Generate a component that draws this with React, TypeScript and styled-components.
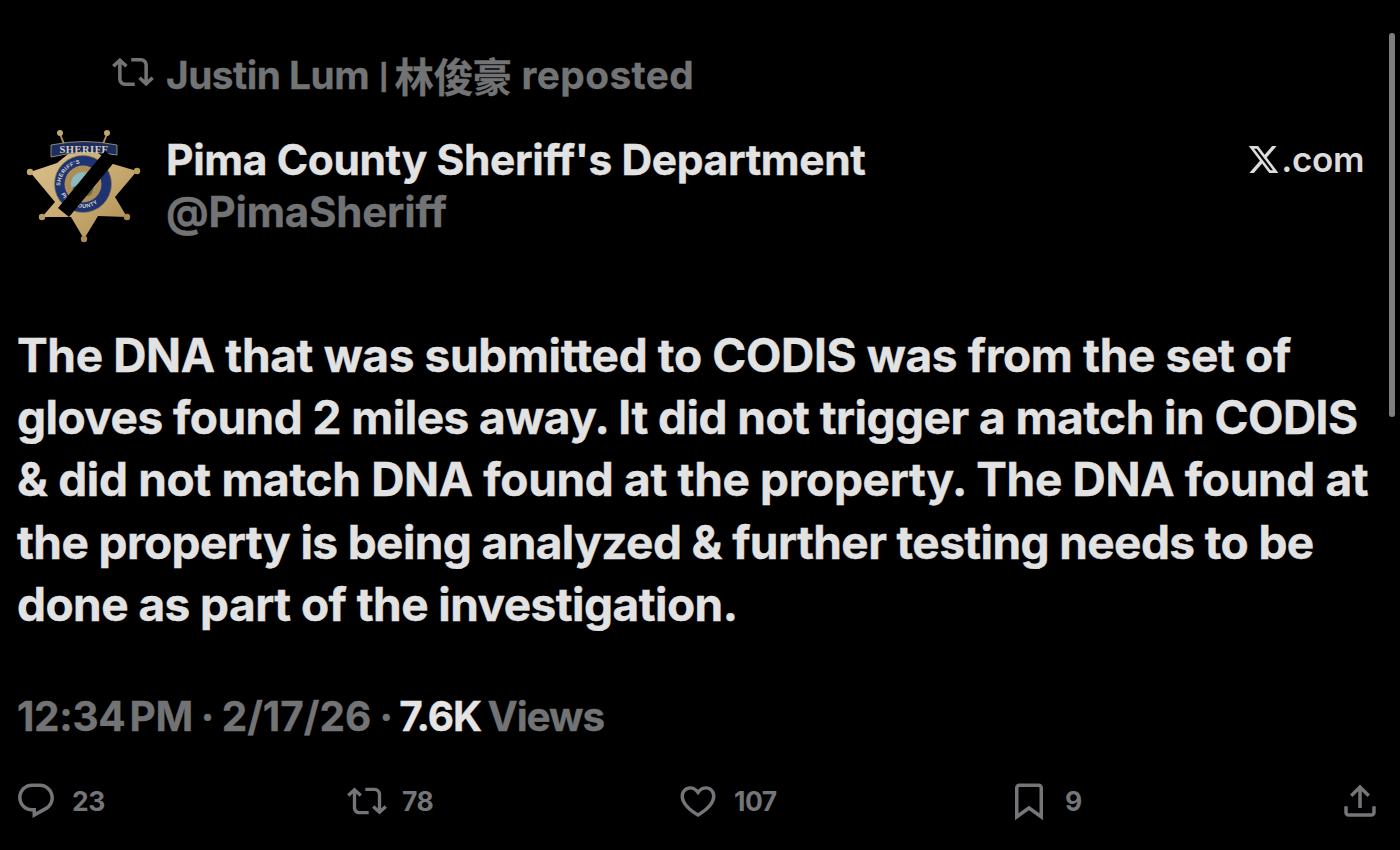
import React from "react";
import styled, { createGlobalStyle } from "styled-components";

const Global = createGlobalStyle`
  html, body { margin: 0; padding: 0; background: #000; }
  #root { width: 1400px; height: 850px; overflow: hidden; }
`;

const Page = styled.div`
  position: relative;
  width: 1400px;
  height: 850px;
  box-sizing: border-box;
  background: #000;
  padding: 46px 36px 0 18px;
  font-family: Inter, "Noto Sans CJK TC", "Liberation Sans", sans-serif;
  overflow: hidden;
`;

const Scrollbar = styled.div`
  position: absolute;
  top: 33px;
  left: 1389px;
  width: 6px;
  height: 384px;
  border-radius: 3px;
  background: #7e7e7e;
`;

const RepostRow = styled.div`
  display: flex;
  align-items: center;
  height: 56px;
  padding-left: 94px;
  color: #727375;
  font-size: 38.8px;
  font-weight: 700;
  letter-spacing: -0.5px;
  white-space: nowrap;
  -webkit-text-stroke: 0.3px currentColor;
`;

const RepostIcon = styled.span`
  display: flex;
  margin: -4px 12px 0 0;
`;

const RepostText = styled.div`
  display: flex;
  align-items: center;
  gap: 10px;
`;

const Pipe = styled.span`
  font-family: "Liberation Sans", sans-serif;
  font-size: 32px;
  margin-right: -3px;
`;

const CjkRun = styled.span`
  font-size: 39.5px;
`;

const Reposted = styled.span`
  letter-spacing: 0.4px;
`;

const AuthorRow = styled.div`
  display: flex;
  align-items: flex-start;
  margin-top: 25px;
`;

const Avatar = styled.svg`
  width: 118px;
  height: 118px;
  margin: 1px 23px 0 7px;
  flex: none;
`;

const Identity = styled.div`
  flex: 1;
  display: flex;
  flex-direction: column;
  padding-top: 7px;
`;

const DisplayName = styled.div`
  color: #e2e2e2;
  font-size: 42.5px;
  line-height: 52px;
  font-weight: 700;
  letter-spacing: -0.38px;
  white-space: nowrap;
  -webkit-text-stroke: 0.35px currentColor;
`;

const Handle = styled.div`
  color: #727375;
  font-size: 42px;
  line-height: 52px;
  font-weight: 700;
  letter-spacing: -0.2px;
  white-space: nowrap;
  -webkit-text-stroke: 0.35px currentColor;
`;

const Source = styled.div`
  display: flex;
  align-items: center;
  gap: 1px;
  margin-top: 10px;
  color: #dcdcdc;
  font-size: 35px;
  line-height: 44px;
  font-weight: 600;
  letter-spacing: -0.4px;
`;

const Body = styled.div`
  margin: 78px 0 0 -1px;
  color: #e2e2e2;
  font-size: 46px;
  line-height: 62.2px;
  font-weight: 700;
  white-space: pre;
  -webkit-text-stroke: 0.4px currentColor;
`;

const BodyLine = styled.div<{ $tracking: number }>`
  letter-spacing: ${(p) => p.$tracking}px;
`;

const Meta = styled.div`
  display: flex;
  gap: 8px;
  margin: 53px 0 0 -1px;
  height: 56px;
  align-items: center;
  color: #727375;
  font-size: 40.5px;
  font-weight: 700;
  letter-spacing: -0.7px;
  white-space: nowrap;
  -webkit-text-stroke: 0.35px currentColor;
`;

const Time = styled.span`
  word-spacing: -5px;
  letter-spacing: -0.35px;
`;

const DateText = styled.span`
  letter-spacing: 0px;
`;

const ViewsText = styled.span`
  word-spacing: -2px;
  letter-spacing: -1.1px;
  margin-left: -1px;
`;

const Strong = styled.span`
  color: #e4e4e4;
`;

const Actions = styled.div`
  display: flex;
  margin: 29px 0 0 -3px;
  height: 56px;
  align-items: center;
`;

const Action = styled.div<{ $w: number }>`
  width: ${(p) => p.$w}px;
  flex: none;
  display: flex;
  align-items: center;
  gap: 15px;
  color: #737578;
  font-size: 26.5px;
  font-weight: 700;
  letter-spacing: -0.5px;
`;

const Icon = styled.svg<{ $s: number }>`
  width: ${(p) => p.$s}px;
  height: ${(p) => p.$s}px;
  fill: currentColor;
  flex: none;
`;

const RETWEET = "M4.5 3.88l4.432 4.14-1.364 1.46L5.5 7.55V16c0 1.1.896 2 2 2H13v2H7.5c-2.209 0-4-1.79-4-4V7.55L1.432 9.48.068 8.02 4.5 3.88zM16.5 6H11V4h5.5c2.209 0 4 1.79 4 4v8.45l2.068-1.93 1.364 1.46-4.432 4.14-4.432-4.14 1.364-1.46 2.068 1.93V8c0-1.1-.896-2-2-2z";
const REPLY = "M1.751 10c0-4.42 3.584-8 8.005-8h4.366c4.49 0 8.129 3.64 8.129 8.13 0 2.96-1.607 5.68-4.196 7.11l-8.054 4.46v-3.69h-.067c-4.49.1-8.183-3.51-8.183-8.01zm8.005-6c-3.317 0-6.005 2.69-6.005 6 0 3.37 2.77 6.08 6.138 6.01l.351-.01h1.761v2.3l5.087-2.81c1.951-1.08 3.163-3.13 3.163-5.36 0-3.39-2.744-6.13-6.129-6.13H9.756z";
const LIKE = "M16.697 5.5c-1.222-.06-2.679.51-3.89 2.16l-.805 1.09-.806-1.09C9.984 6.01 8.526 5.44 7.304 5.5c-1.243.07-2.349.78-2.91 1.91-.552 1.12-.633 2.78.479 4.82 1.074 1.97 3.257 4.27 7.129 6.61 3.87-2.34 6.052-4.64 7.126-6.61 1.111-2.04 1.03-3.7.477-4.82-.561-1.13-1.666-1.84-2.908-1.91zm4.187 7.69c-1.351 2.48-4.001 5.12-8.379 7.67l-.503.3-.504-.3c-4.379-2.55-7.029-5.19-8.382-7.67-1.36-2.5-1.41-4.86-.514-6.67.887-1.79 2.647-2.91 4.601-3.01 1.651-.09 3.368.56 4.798 2.01 1.429-1.45 3.146-2.1 4.796-2.01 1.954.1 3.714 1.22 4.601 3.01.896 1.81.846 4.17-.514 6.67z";
const BOOKMARK = "M4 4.5C4 3.12 5.119 2 6.5 2h11C18.881 2 20 3.12 20 4.5v18.44l-8-5.71-8 5.71V4.5zM6.5 4c-.276 0-.5.22-.5.5v14.56l6-4.29 6 4.29V4.5c0-.28-.224-.5-.5-.5h-11z";
const SHARE = "M12 2.59l5.7 5.7-1.41 1.42L13 6.41V16h-2V6.41l-3.3 3.3-1.41-1.42L12 2.59zM21 15l-.02 3.51c0 1.38-1.12 2.49-2.5 2.49H5.5C4.11 21 3 19.88 3 18.5V15h2v3.5c0 .28.22.5.5.5h12.98c.28 0 .5-.22.5-.5L19 15h2z";
const XLOGO = "M18.244 2.25h3.308l-7.227 8.26 8.502 11.24H16.17l-5.214-6.817L4.99 21.75H1.68l7.73-8.835L1.254 2.25H8.08l4.713 6.231zm-1.161 17.52h1.833L7.084 4.126H5.117z";

const Glyph = ({ d, s }: { d: string; s: number }) => (
  <Icon $s={s} viewBox="0 0 24 24"><path d={d} /></Icon>
);

const Badge = () => (
  <Avatar viewBox="0 0 118 118">
    <defs>
      <linearGradient id="gold" x1="0" y1="0" x2="1" y2="1">
        <stop offset="0" stopColor="#dcc390" />
        <stop offset="0.55" stopColor="#c8aa70" />
        <stop offset="1" stopColor="#a98a52" />
      </linearGradient>
      <path id="ringTop" d="M35 58 A23.5 23.5 0 0 1 81 52" />
      <path id="ringBottom" d="M36 66 A24.5 24.5 0 0 0 81 64" />
    </defs>
    <path d="M35 6 L39 16 M82 6 L78 16" stroke="#a98a52" strokeWidth="2" />
    <circle cx="35" cy="5" r="3" fill="#c4a56a" />
    <circle cx="82" cy="5" r="3" fill="#c4a56a" />
    <polygon
      fill="url(#gold)"
      points="58,14 88,36 112,43 90,69 102,89 73,88 59,111 46,89 17,89 30,74 5,44 32,35"
    />
    <circle cx="5" cy="44" r="3.2" fill="#c8aa70" />
    <circle cx="112" cy="43" r="3.2" fill="#b99c62" />
    <circle cx="17" cy="89" r="3.2" fill="#b99c62" />
    <circle cx="102" cy="89" r="3.2" fill="#a98a52" />
    <circle cx="59" cy="111" r="3.2" fill="#a98a52" />
    <path d="M26 17 Q59 10 92 17 L92 27 Q59 21 26 29 Z" fill="#1f2c5e" stroke="#a9a48f" strokeWidth="0.8" />
    <text x="59" y="25" textAnchor="middle" fontFamily="Liberation Serif, serif" fontSize="10.5" fontWeight="700" fill="#d4cfbc" letterSpacing="0.5">SHERIFF</text>
    <circle cx="58" cy="56" r="28.5" fill="#1f3272" stroke="#8d7a4c" strokeWidth="0.8" />
    <text fontFamily="Liberation Sans, sans-serif" fontSize="5.6" fontWeight="700" fill="#d9d6c8" letterSpacing="0.4">
      <textPath href="#ringTop">SHERIFF'S</textPath>
    </text>
    <text fontFamily="Liberation Sans, sans-serif" fontSize="5.6" fontWeight="700" fill="#d9d6c8" letterSpacing="0.4">
      <textPath href="#ringBottom">PIMA COUNTY</textPath>
    </text>
    <circle cx="58" cy="56" r="18.5" fill="#ab8e58" />
    <circle cx="58" cy="56" r="12" fill="#8bb9bd" />
    <path d="M47 60 Q58 52 69 60 L66 67 Q58 70 50 67 Z" fill="#6f6a3e" />
    <path d="M80 23 L91 32 L44 89 L33 80 Z" fill="#000" />
  </Avatar>
);

const lines: { text: string; tracking: number }[] = [
  { text: "The DNA that was submitted to CODIS was from the set of", tracking: -0.35 },
  { text: "gloves found 2 miles away. It did not trigger a match in CODIS", tracking: -0.53 },
  { text: "& did not match DNA found at the property. The DNA found at", tracking: -0.33 },
  { text: "the property is being analyzed & further testing needs to be", tracking: -0.6 },
  { text: "done as part of the investigation.", tracking: -0.55 },
];

const App = () => (
  <Page>
    <Global />
    <Scrollbar />
    <RepostRow>
      <RepostIcon><Glyph d={RETWEET} s={42} /></RepostIcon>
      <RepostText>
        <span>Justin Lum</span>
        <Pipe>|</Pipe>
        <CjkRun>林俊豪</CjkRun>
        <Reposted>reposted</Reposted>
      </RepostText>
    </RepostRow>
    <AuthorRow>
      <Badge />
      <Identity>
        <DisplayName>Pima County Sheriff's Department</DisplayName>
        <Handle>@PimaSheriff</Handle>
      </Identity>
      <Source>
        <Glyph d={XLOGO} s={33} />
        <span>.com</span>
      </Source>
    </AuthorRow>
    <Body>
      {lines.map((l) => (
        <BodyLine key={l.text} $tracking={l.tracking}>{l.text}</BodyLine>
      ))}
    </Body>
    <Meta>
      <Time>12:34 PM</Time>
      <span>·</span>
      <DateText>2/17/26</DateText>
      <span>·</span>
      <ViewsText><Strong>7.6K</Strong> Views</ViewsText>
    </Meta>
    <Actions>
      <Action $w={332}><Glyph d={REPLY} s={42} /><span>23</span></Action>
      <Action $w={330}><Glyph d={RETWEET} s={40} /><span>78</span></Action>
      <Action $w={331}><Glyph d={LIKE} s={42} /><span>107</span></Action>
      <Action $w={331}><Glyph d={BOOKMARK} s={42} /><span>9</span></Action>
      <Action $w={42}><Glyph d={SHARE} s={42} /></Action>
    </Actions>
  </Page>
);

export default App;
